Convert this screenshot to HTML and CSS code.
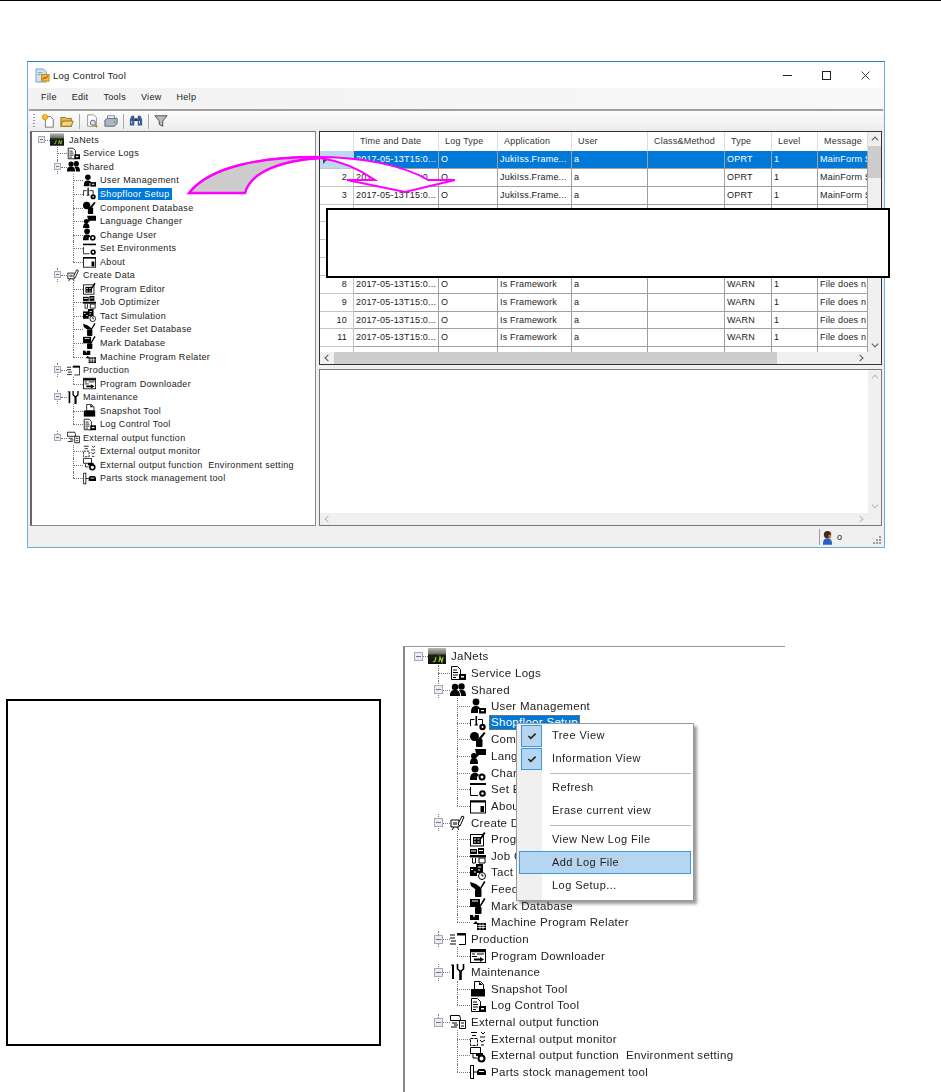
FILE: index.html
```html
<!DOCTYPE html>
<html>
<head>
<meta charset="utf-8">
<title>Log Control Tool</title>
<link rel="stylesheet" href="styles.css">
</head>
<body>
<svg width="0" height="0" class="defs">
<defs>
<linearGradient id="jn" x1="0" y1="0" x2="0" y2="1"><stop offset="0" stop-color="#b9bdb2"/><stop offset=".35" stop-color="#6d7363"/><stop offset=".45" stop-color="#1c2018"/><stop offset="1" stop-color="#0e100c"/></linearGradient>
<symbol id="i-logs" viewBox="0 0 16 16"><path d="M1.500 1.500h6l3 3v10h-9z" fill="#fff" stroke="#000"/><path d="M3 5h4M3 7.500h5M3 10h5M3 12.500h3" stroke="#000"/><rect x="9" y="9" width="7" height="6" fill="#000"/><rect x="11" y="11" width="3" height="1.500" fill="#fff"/></symbol>
<symbol id="i-users" viewBox="0 0 16 16"><circle cx="5" cy="5" r="3.200"/><circle cx="11.500" cy="4.500" r="3.200"/><path d="M0 14c0-5 2-6 5-6s5 1 5 6zM9 8h3c3 0 4 2 4 6h-5c0-3-1-4.500-2-6z"/></symbol>
<symbol id="i-user" viewBox="0 0 16 16"><circle cx="6" cy="4" r="3.400"/><path d="M1 15c0-6 2-7 5-7s3.500 1 4 3H8v4z"/><rect x="9" y="10" width="7" height="5.500" fill="#000"/><rect x="11" y="12" width="3" height="1.200" fill="#fff"/></symbol>
<symbol id="i-shop" viewBox="0 0 16 16"><path d="M.5 11V4.500h4M8 4.500h4.500V9" fill="none" stroke="#000"/><path d="M6.300 1v9" stroke="#000" stroke-width="1.600"/><path d="M4.500 10h3.500" stroke="#000"/><circle cx="12.500" cy="12" r="3.200"/><circle cx="12.500" cy="12" r="1" fill="#fff"/></symbol>
<symbol id="i-comp" viewBox="0 0 16 16"><circle cx="4.500" cy="5.500" r="4.500"/><path d="M8 8l6-7 1.500 1-5 7z"/><rect x="6" y="8" width="6.500" height="8" rx="1"/></symbol>
<symbol id="i-lang" viewBox="0 0 16 16"><path d="M5 1h11v6H9l-2 2z"/><circle cx="4" cy="8" r="3"/><path d="M0 16c0-4 1-6 4-6s4 2 4 6z"/></symbol>
<symbol id="i-change" viewBox="0 0 16 16"><circle cx="5" cy="4" r="3.500"/><path d="M0 15c0-6 2-7 5-7 2 0 3 .5 4 2L7 12v3z"/><circle cx="12" cy="12" r="2.500" fill="#fff" stroke="#000" stroke-width="2"/></symbol>
<symbol id="i-env" viewBox="0 0 16 16"><path d="M0 3h16" stroke="#000" stroke-width="2"/><path d="M.5 6v8.500H8" fill="none" stroke="#000"/><circle cx="12.500" cy="12.500" r="2.300" fill="#fff" stroke="#000" stroke-width="2"/></symbol>
<symbol id="i-about" viewBox="0 0 16 16"><rect x=".5" y="3" width="15" height="12" fill="#fff" stroke="#000"/><path d="M0 3.500h16" stroke="#000" stroke-width="2"/><rect x="10.500" y="8" width="3.500" height="6"/></symbol>
<symbol id="i-create" viewBox="0 0 16 16"><path d="M1 5h8v7H1z" fill="#fff" stroke="#000"/><path d="M3 7h4v3H3z" fill="#777"/><path d="M8 9l4-8 2 1-4 9z" fill="#fff" stroke="#000"/><path d="M4 12l-2 3M7 12l2 3" stroke="#000"/></symbol>
<symbol id="i-prog" viewBox="0 0 16 16"><rect x=".5" y="3.500" width="13" height="11.500" fill="#fff" stroke="#000"/><rect x="3" y="6" width="8" height="7"/><path d="M4 8h2M7.500 8h2M4 11h2M7.500 11h2" stroke="#fff"/><path d="M10 7l4-6 1.500 1-4 6z"/></symbol>
<symbol id="i-job" viewBox="0 0 16 16"><rect x="0" y="1" width="7" height="5"/><rect x="8" y="0" width="6" height="6"/><path d="M1 3h5M9 2.500h4" stroke="#fff"/><rect x="0" y="7" width="16" height="2.500"/><path d="M2.500 10v5h3v-5M9 10h6v5H9z" fill="#fff" stroke="#000"/></symbol>
<symbol id="i-tact" viewBox="0 0 16 16"><rect x="0" y="3" width="7" height="9"/><rect x="6" y="0" width="7" height="9"/><path d="M1 5.500h2M4 8h2M8 3h3M8 6h2" stroke="#fff"/><circle cx="12" cy="12" r="3.500" fill="#fff" stroke="#000"/><path d="M12 10v2h1.500" stroke="#000" fill="none"/></symbol>
<symbol id="i-feeder" viewBox="0 0 16 16"><path d="M0 1l6 2 4 3 1 2H5L1 5z"/><path d="M14 0l1.500 1-5 8-1-1z"/><rect x="5" y="8" width="6.500" height="8" rx="1"/></symbol>
<symbol id="i-mark" viewBox="0 0 16 16"><path d="M0 1h10v8H0z"/><path d="M2 3h6" stroke="#fff"/><path d="M14 0l1.500 1-5 8-1-1z"/><rect x="5" y="9" width="6.500" height="7" rx="1"/></symbol>
<symbol id="i-relater" viewBox="0 0 16 16"><path d="M0 1h3l1 3 1-3h4v5H0z"/><path d="M6 7l2 3H3z"/><rect x="7" y="9" width="9" height="7"/><path d="M7.500 11.500h8M7.500 13.500h8M10 9.500v6M13 9.500v6" stroke="#fff" stroke-width=".8"/></symbol>
<symbol id="i-prod" viewBox="0 0 16 16"><path d="M7.500 2.500h8v11H9" fill="none" stroke="#000"/><path d="M7 3.500h9" stroke="#000" stroke-width="2"/><path d="M0 4h5M0 7h5M1 10h5M0 13h6" stroke="#000"/></symbol>
<symbol id="i-dl" viewBox="0 0 16 16"><rect x=".5" y="1.500" width="15" height="13" fill="#fff" stroke="#000"/><path d="M0 3h16" stroke="#000" stroke-width="2.500"/><path d="M2 6h3M7 6h7M2 8.500h5" stroke="#000"/><path d="M4 10.500h6V9l4 2.500-4 2.500v-1.500H4z"/></symbol>
<symbol id="i-maint" viewBox="0 0 16 16"><path d="M3 1v14" stroke="#000" stroke-width="2"/><path d="M1 1h3" stroke="#000"/><path d="M7.500 0v5l3 2.500 3-2.500V0" fill="none" stroke="#000" stroke-width="1.600"/><path d="M10.500 7v9" stroke="#000" stroke-width="2.600"/></symbol>
<symbol id="i-snap" viewBox="0 0 16 16"><path d="M4.500 .5h6l3 3v5h-9z" fill="#fff" stroke="#000"/><path d="M1 8h14v7.500H1z"/><path d="M9 1l4 3H9z"/></symbol>
<symbol id="i-ext" viewBox="0 0 16 16"><path d="M.5 1.500h9l1 3v2H.5z" fill="#fff" stroke="#000"/><path d="M2 9h5M4 11h4M1 13h6" stroke="#000"/><path d="M9.500 6.500h6v8h-6z" fill="#fff" stroke="#000"/><path d="M11 9h3M11 12h3" stroke="#000"/></symbol>
<symbol id="i-mon" viewBox="0 0 16 16"><path d="M1 1.500h6M2 4.500h4" stroke="#000"/><path d="M.5 7.500h7v7h-7z" fill="none" stroke="#000" stroke-dasharray="3 1"/><path d="M11 1l2 2 2-2M10 6h5M10 9l2 2 3-2M11 14h3" fill="none" stroke="#000"/></symbol>
<symbol id="i-extset" viewBox="0 0 16 16"><path d="M.5 .5h10v6H.5z" fill="#fff" stroke="#000"/><path d="M3 7v4h4" fill="none" stroke="#000"/><rect x="6" y="6" width="7" height="3"/><circle cx="11.500" cy="11.500" r="3" fill="#fff" stroke="#000" stroke-width="2"/></symbol>
<symbol id="i-parts" viewBox="0 0 16 16"><path d="M3.500 1.500H.5v13h3" fill="none" stroke="#000"/><path d="M3.500 1v14M3.500 8H7" stroke="#000"/><path d="M7 7l1.500-2h6l1.500 2v4H7z"/><path d="M9 7.500h5" stroke="#fff"/></symbol>
<symbol id="i-janets" viewBox="0 0 18 16"><rect width="18" height="16" fill="url(#jn)"/><path d="M8 9l-1 4-2 1M11 14l1-5 2 5 1-5" fill="none" stroke="#8fd12a" stroke-width="1.200"/></symbol>
</defs>
</svg>

<div class="topline"></div>

<section class="window">
  <div class="titlebar">
    <svg class="appicon" viewBox="0 0 16 16"><path d="M1 1h8l3 3v11H1z" fill="#cfe3f5" stroke="#7d9fc0"/><path d="M3 5h5M3 7h3" stroke="#7d9fc0"/><rect x="7" y="7" width="8" height="7" fill="#f2c230" stroke="#b98a10"/><path d="M8 12l2-2 1.500 1L14 8" fill="none" stroke="#d8402a" stroke-width="1.200"/></svg>
    <span class="wintitle">Log Control Tool</span>
    <div class="wincontrols">
      <svg class="winbtn" viewBox="0 0 9 9"><path d="M0 4.500h9" stroke="#222"/></svg>
      <svg class="winbtn" viewBox="0 0 9 9"><rect x=".5" y=".5" width="8" height="8" fill="none" stroke="#222"/></svg>
      <svg class="winbtn" viewBox="0 0 9 9"><path d="M.5.500l8 8M8.500.500l-8 8" stroke="#222" stroke-width=".9"/></svg>
    </div>
  </div>
  <nav class="menubar"><span>File</span><span>Edit</span><span>Tools</span><span>View</span><span>Help</span></nav>
  <div class="toolbar">
    <i class="gripper"></i>
    <svg class="tool" viewBox="0 0 16 16"><path d="M5 3h6l3 3v9H5z" fill="#fff" stroke="#666"/><circle cx="4.500" cy="3.500" r="3" fill="#f6c21c" stroke="#e08a10"/></svg>
    <svg class="tool" viewBox="0 0 16 16"><path d="M1 4h5l1 1h6v9H1z" fill="#e8b94a" stroke="#8d6a1c"/><path d="M3 8h12l-2 6H1z" fill="#f5d37c" stroke="#8d6a1c"/></svg>
    <i class="toolsep"></i>
    <svg class="tool" viewBox="0 0 16 16"><path d="M3 1h7l3 3v10H3z" fill="#fff" stroke="#888"/><circle cx="9" cy="10" r="3" fill="#cfe3f5" stroke="#557"/><path d="M11 12l3 3" stroke="#b98a10" stroke-width="2"/></svg>
    <svg class="tool" viewBox="0 0 16 16"><path d="M4 2h8v4H4z" fill="#fff" stroke="#777"/><path d="M1 7l3-2h11v6l-3 3H1z" fill="#a9b6c4" stroke="#55606c"/><circle cx="12" cy="9" r="1" fill="#3fb03f"/></svg>
    <i class="toolsep"></i>
    <svg class="tool" viewBox="0 0 16 16"><path d="M3 2h3v11H1V6zM10 2h3l2 4v7h-5z" fill="#3a5a96"/><rect x="6" y="5" width="4" height="3" fill="#1d2d55"/><path d="M3 8v3M12 8v3" stroke="#cfe0ff"/></svg>
    <i class="toolsep"></i>
    <svg class="tool" viewBox="0 0 16 16"><path d="M1 2h14l-5 6v6l-4-2V8z" fill="#bbb" stroke="#444"/></svg>
  </div>
  <div class="panes">
    <div class="navpane">
      <ul class="tree tree-small">
        <li class="row l0 first"><b class="expander"></b><svg class="ico"><use href="#i-janets"/></svg><span>JaNets</span></li>
        <li class="row l1"><svg class="ico"><use href="#i-logs"/></svg><span>Service Logs</span></li>
        <li class="row l0b"><b class="expander"></b><svg class="ico"><use href="#i-users"/></svg><span>Shared</span></li>
        <li class="row l2"><svg class="ico"><use href="#i-user"/></svg><span>User Management</span></li>
        <li class="row l2"><svg class="ico"><use href="#i-shop"/></svg><span class="sel">Shopfloor Setup</span></li>
        <li class="row l2"><svg class="ico"><use href="#i-comp"/></svg><span>Component Database</span></li>
        <li class="row l2"><svg class="ico"><use href="#i-lang"/></svg><span>Language Changer</span></li>
        <li class="row l2"><svg class="ico"><use href="#i-change"/></svg><span>Change User</span></li>
        <li class="row l2"><svg class="ico"><use href="#i-env"/></svg><span>Set Environments</span></li>
        <li class="row l2 last"><svg class="ico"><use href="#i-about"/></svg><span>About</span></li>
        <li class="row l0b"><b class="expander"></b><svg class="ico"><use href="#i-create"/></svg><span>Create Data</span></li>
        <li class="row l2"><svg class="ico"><use href="#i-prog"/></svg><span>Program Editor</span></li>
        <li class="row l2"><svg class="ico"><use href="#i-job"/></svg><span>Job Optimizer</span></li>
        <li class="row l2"><svg class="ico"><use href="#i-tact"/></svg><span>Tact Simulation</span></li>
        <li class="row l2"><svg class="ico"><use href="#i-feeder"/></svg><span>Feeder Set Database</span></li>
        <li class="row l2"><svg class="ico"><use href="#i-mark"/></svg><span>Mark Database</span></li>
        <li class="row l2 last"><svg class="ico"><use href="#i-relater"/></svg><span>Machine Program Relater</span></li>
        <li class="row l0b"><b class="expander"></b><svg class="ico"><use href="#i-prod"/></svg><span>Production</span></li>
        <li class="row l2 last"><svg class="ico"><use href="#i-dl"/></svg><span>Program Downloader</span></li>
        <li class="row l0b"><b class="expander"></b><svg class="ico"><use href="#i-maint"/></svg><span>Maintenance</span></li>
        <li class="row l2"><svg class="ico"><use href="#i-snap"/></svg><span>Snapshot Tool</span></li>
        <li class="row l2 last"><svg class="ico"><use href="#i-logs"/></svg><span>Log Control Tool</span></li>
        <li class="row l0b lastb"><b class="expander"></b><svg class="ico"><use href="#i-ext"/></svg><span>External output function</span></li>
        <li class="row l2"><svg class="ico"><use href="#i-mon"/></svg><span>External output monitor</span></li>
        <li class="row l2"><svg class="ico"><use href="#i-extset"/></svg><span>External output function&nbsp; Environment setting</span></li>
        <li class="row l2 last"><svg class="ico"><use href="#i-parts"/></svg><span>Parts stock management tool</span></li>
      </ul>
    </div>
    <div class="rightpanes">
      <div class="gridpane">
        <div class="gridbody">
          <div class="grid">
            <div class="c head"></div><div class="c head">Time and Date</div><div class="c head">Log Type</div><div class="c head">Application</div><div class="c head">User</div><div class="c head">Class&amp;Method</div><div class="c head">Type</div><div class="c head">Level</div><div class="c head">Message</div>

            <div class="c num current"><svg class="rowmark" viewBox="0 0 6 8"><path d="M1 0l4 4-4 4z" fill="#445"/></svg></div><div class="c selrow">2017-05-13T15:0...</div><div class="c selrow">O</div><div class="c selrow">JukiIss.Frame...</div><div class="c selrow">a</div><div class="c selrow"></div><div class="c selrow">OPRT</div><div class="c selrow">1</div><div class="c selrow">MainForm S</div>

            <div class="c num">2</div><div class="c">2017-05-13T15:0...</div><div class="c">O</div><div class="c">JukiIss.Frame...</div><div class="c">a</div><div class="c"></div><div class="c">OPRT</div><div class="c">1</div><div class="c">MainForm S</div>

            <div class="c num">3</div><div class="c">2017-05-13T15:0...</div><div class="c">O</div><div class="c">JukiIss.Frame...</div><div class="c">a</div><div class="c"></div><div class="c">OPRT</div><div class="c">1</div><div class="c">MainForm S</div>

            <div class="c num"></div><div class="c"></div><div class="c"></div><div class="c"></div><div class="c"></div><div class="c"></div><div class="c"></div><div class="c"></div><div class="c"></div>
            <div class="c num"></div><div class="c"></div><div class="c"></div><div class="c"></div><div class="c"></div><div class="c"></div><div class="c"></div><div class="c"></div><div class="c"></div>
            <div class="c num"></div><div class="c"></div><div class="c"></div><div class="c"></div><div class="c"></div><div class="c"></div><div class="c"></div><div class="c"></div><div class="c"></div>
            <div class="c num"></div><div class="c"></div><div class="c"></div><div class="c"></div><div class="c"></div><div class="c"></div><div class="c"></div><div class="c"></div><div class="c"></div>

            <div class="c num">8</div><div class="c">2017-05-13T15:0...</div><div class="c">O</div><div class="c">Is Framework</div><div class="c">a</div><div class="c"></div><div class="c">WARN</div><div class="c">1</div><div class="c">File does n</div>

            <div class="c num">9</div><div class="c">2017-05-13T15:0...</div><div class="c">O</div><div class="c">Is Framework</div><div class="c">a</div><div class="c"></div><div class="c">WARN</div><div class="c">1</div><div class="c">File does n</div>

            <div class="c num">10</div><div class="c">2017-05-13T15:0...</div><div class="c">O</div><div class="c">Is Framework</div><div class="c">a</div><div class="c"></div><div class="c">WARN</div><div class="c">1</div><div class="c">File does n</div>

            <div class="c num">11</div><div class="c">2017-05-13T15:0...</div><div class="c">O</div><div class="c">Is Framework</div><div class="c">a</div><div class="c"></div><div class="c">WARN</div><div class="c">1</div><div class="c">File does n</div>

            <div class="c num"></div><div class="c"></div><div class="c"></div><div class="c"></div><div class="c"></div><div class="c"></div><div class="c"></div><div class="c"></div><div class="c"></div>
          </div>
          <div class="vscroll"><i class="up"></i><i class="vthumb"></i><i class="spacer"></i><i class="down"></i></div>
        </div>
        <div class="hscroll"><i class="left"></i><i class="hthumb"></i><i class="right"></i><i class="corner"></i></div>
      </div>
      <div class="detailpane">
        <div class="detailbody"><div class="detailtext"></div><div class="vscroll dim"><i class="up"></i><i class="spacer"></i><i class="down"></i></div></div>
        <div class="hscroll dim"><i class="left"></i><i class="spacer"></i><i class="right"></i><i class="corner"></i></div>
      </div>
    </div>
  </div>
  <div class="statusbar">
    <i class="statsep"></i>
    <svg class="staticon" viewBox="0 0 12 16"><circle cx="6" cy="5" r="4" fill="#3a2c22"/><path d="M7 5h3v3H7z" fill="#e0792a"/><path d="M1 16c0-6 2-7 5-7s5 1 5 7z" fill="#2c5fbe"/></svg>
    <span class="statuser">o</span>
    <svg class="grip" viewBox="0 0 12 12"><path d="M9 2h2v2H9zM6 5h2v2H6zM9 5h2v2H9zM3 8h2v2H3zM6 8h2v2H6zM9 8h2v2H9z" fill="#9a9a9a"/></svg>
  </div>
  <svg class="callout-arrow" viewBox="0 0 290 60" width="290" height="60">
    <path d="M8 48C30 20 85 12 135 12C180 12 222 20 247 35H274L224 47L166 35H194C178 24 160 16 139 13C105 15 70 25 64 48Z" fill="#fff" stroke="#ff00ff" stroke-width="2"/>
    <path d="M8 48C30 20 85 12 135 12L139 13C105 15 70 25 64 48Z" fill="#ccc" stroke="#ff00ff" stroke-width="2.400"/>
  </svg>
  <div class="blankbox topbox"></div>
</section>

<section class="lower">
  <div class="blankbox sidebox"></div>
  <div class="treepanel">
    <ul class="tree tree-large">
      <li class="row l0 first"><b class="expander"></b><svg class="ico"><use href="#i-janets"/></svg><span>JaNets</span></li>
      <li class="row l1"><svg class="ico"><use href="#i-logs"/></svg><span>Service Logs</span></li>
      <li class="row l0b"><b class="expander"></b><svg class="ico"><use href="#i-users"/></svg><span>Shared</span></li>
      <li class="row l2"><svg class="ico"><use href="#i-user"/></svg><span>User Management</span></li>
      <li class="row l2"><svg class="ico"><use href="#i-shop"/></svg><span class="sel dotted">Shopfloor Setup</span></li>
      <li class="row l2"><svg class="ico"><use href="#i-comp"/></svg><span class="under">Component Database</span></li>
      <li class="row l2"><svg class="ico"><use href="#i-lang"/></svg><span class="under">Language Changer</span></li>
      <li class="row l2"><svg class="ico"><use href="#i-change"/></svg><span class="under">Change User</span></li>
      <li class="row l2"><svg class="ico"><use href="#i-env"/></svg><span class="under">Set Environments</span></li>
      <li class="row l2 last"><svg class="ico"><use href="#i-about"/></svg><span class="under">About</span></li>
      <li class="row l0b"><b class="expander"></b><svg class="ico"><use href="#i-create"/></svg><span class="under-top">Create Data</span></li>
      <li class="row l2"><svg class="ico"><use href="#i-prog"/></svg><span class="under">Program Editor</span></li>
      <li class="row l2"><svg class="ico"><use href="#i-job"/></svg><span class="under">Job Optimizer</span></li>
      <li class="row l2"><svg class="ico"><use href="#i-tact"/></svg><span class="under">Tact Simulation</span></li>
      <li class="row l2"><svg class="ico"><use href="#i-feeder"/></svg><span class="under">Feeder Set Database</span></li>
      <li class="row l2"><svg class="ico"><use href="#i-mark"/></svg><span>Mark Database</span></li>
      <li class="row l2 last"><svg class="ico"><use href="#i-relater"/></svg><span>Machine Program Relater</span></li>
      <li class="row l0b"><b class="expander"></b><svg class="ico"><use href="#i-prod"/></svg><span>Production</span></li>
      <li class="row l2 last"><svg class="ico"><use href="#i-dl"/></svg><span>Program Downloader</span></li>
      <li class="row l0b"><b class="expander"></b><svg class="ico"><use href="#i-maint"/></svg><span>Maintenance</span></li>
      <li class="row l2"><svg class="ico"><use href="#i-snap"/></svg><span>Snapshot Tool</span></li>
      <li class="row l2 last"><svg class="ico"><use href="#i-logs"/></svg><span>Log Control Tool</span></li>
      <li class="row l0b lastb"><b class="expander"></b><svg class="ico"><use href="#i-ext"/></svg><span>External output function</span></li>
      <li class="row l2"><svg class="ico"><use href="#i-mon"/></svg><span>External output monitor</span></li>
      <li class="row l2"><svg class="ico"><use href="#i-extset"/></svg><span>External output function&nbsp; Environment setting</span></li>
      <li class="row l2 last"><svg class="ico"><use href="#i-parts"/></svg><span>Parts stock management tool</span></li>
    </ul>
    <div class="ctxmenu">
      <div class="mi checked"><i class="check"><svg viewBox="0 0 10 10"><path d="M2 5l2 2 4-4" fill="none" stroke="#222" stroke-width="1.300"/></svg></i>Tree View</div>
      <div class="mi checked"><i class="check"><svg viewBox="0 0 10 10"><path d="M2 5l2 2 4-4" fill="none" stroke="#222" stroke-width="1.300"/></svg></i>Information View</div>
      <hr>
      <div class="mi">Refresh</div>
      <div class="mi">Erase current view</div>
      <hr>
      <div class="mi">View New Log File</div>
      <div class="mi active">Add Log File</div>
      <div class="mi">Log Setup...</div>
    </div>
  </div>
</section>
</body>
</html>
```
FILE: styles.css
```css
* { box-sizing: border-box; }
html, body { margin: 0; padding: 0; background: #fff; }
body { width: 941px; height: 1092px; overflow: hidden; font-family: "Liberation Sans", Arial, sans-serif; color: #1a1a1a; }
.defs { position: absolute; }
ul { list-style: none; margin: 0; padding: 0; }
i, b { display: block; font-style: normal; }
.topline { height: 1px; background: #000; }

.window { position: relative; width: 858px; height: 487px; margin: 60px 0 0 27px; border: 1px solid #6aaee0; border-top-color: #2d86d0; background: #f0f0f0; display: flex; flex-direction: column; font-size: 9px; }
.titlebar { height: 26px; flex: none; background: #fff; display: flex; align-items: center; padding-left: 7px; }
.appicon { width: 15px; height: 15px; margin-right: 3px; }
.wintitle { font-size: 9.5px; letter-spacing: .25px; color: #222; }
.wincontrols { margin-left: auto; display: flex; gap: 30px; padding-right: 14px; }
.winbtn { width: 9px; height: 9px; display: block; }
.menubar { height: 21px; flex: none; background: linear-gradient(90deg, #f2f2f2, #f8f8f8); display: flex; align-items: center; padding: 0 0 3px 13px; gap: 15px; font-size: 9px; letter-spacing: .3px; }
.toolbar { height: 22px; flex: none; margin: 0 1px; border-top: 2px solid #a0a0a0; background: linear-gradient(#fdfdfd, #ececec); display: flex; align-items: center; padding-left: 4px; gap: 5px; position: relative; }
.gripper { width: 2px; height: 14px; margin-right: 1px; background: repeating-linear-gradient(#999 0 1px, transparent 1px 3px); }
.tool { width: 14px; height: 14px; flex: none; }
.toolsep { width: 1px; height: 15px; background: #aaa; }
.panes { flex: 1; min-height: 0; display: flex; padding: 0 2px; gap: 3px; background: #f0f0f0; }

.navpane { width: 286px; flex: none; height: 395px; border: 1px solid #8a8a8a; border-left: 2px solid #666; border-top-color: #777; background: #fff; overflow: hidden; padding-top: 1px; }
.rightpanes { flex: 1; min-width: 0; display: flex; flex-direction: column; gap: 4px; height: 395px; }
.gridpane { height: 234px; border: 1px solid #333; background: #fff; display: flex; flex-direction: column; }
.gridbody { flex: 1; min-height: 0; display: flex; overflow: hidden; }
.grid { flex: 1; min-width: 0; display: grid; grid-template-columns: 34px 85px 59px 74px 76px 77px 47px 46px 50px; grid-auto-rows: 17.85px; grid-template-rows: 19px; overflow: hidden; font-size: 9px; letter-spacing: .2px; }
.c { border-right: 1px solid #a0a0a0; border-bottom: 1px solid #a0a0a0; white-space: nowrap; overflow: hidden; padding: 0 2px; line-height: 17px; }
.head { background: #fff; border-right-color: #ddd; border-bottom: 0; padding-left: 6px; line-height: 19px; color: #333; }
.num { text-align: right; padding-right: 6px; border-right-color: #c4c4c4; border-bottom-color: #c4c4c4; }
.current { background: #bcd9f2; text-align: left; padding-left: 2px; }
.rowmark { width: 6px; height: 8px; display: block; margin-top: 5px; }
.selrow { background: #0078d7; color: #fff; }
.vscroll { width: 13px; flex: none; background: #f0f0f0; display: flex; flex-direction: column; position: relative; }
.vscroll .up, .vscroll .down { height: 14px; flex: none; position: relative; }
.vthumb { height: 32px; flex: none; background: #cdcdcd; }
.spacer { flex: 1; }
.hscroll { height: 12px; flex: none; background: #f0f0f0; display: flex; align-items: stretch; }
.left, .right, .corner { width: 14px; flex: none; position: relative; }
.corner { width: 13px; }
.hthumb { width: 443px; flex: none; background: #cdcdcd; }
.hscroll .hthumb + .right { margin-left: auto; }
.up::after, .down::after, .left::after, .right::after { content: ""; position: absolute; left: 50%; top: 50%; width: 4px; height: 4px; border-left: 1.5px solid #555; border-top: 1.5px solid #555; }
.up::after { transform: translate(-50%, -30%) rotate(45deg); }
.down::after { transform: translate(-50%, -70%) rotate(225deg); }
.left::after { transform: translate(-30%, -50%) rotate(-45deg); }
.right::after { transform: translate(-70%, -50%) rotate(135deg); }
.dim .up::after, .dim .down::after, .dim .left::after, .dim .right::after { border-color: #bbb; }
.detailpane { flex: 1; border: 1px solid #777; background: #fff; display: flex; flex-direction: column; min-height: 0; }
.detailbody { flex: 1; display: flex; min-height: 0; }
.detailtext { flex: 1; background: #fff; }

.statusbar { height: 20px; flex: none; background: #f0f0f0; display: flex; align-items: center; justify-content: flex-end; padding-right: 2px; }
.statsep { width: 1px; height: 16px; background: #a0a0a0; margin-right: 2px; }
.staticon { width: 11px; height: 15px; margin-right: 4px; }
.statuser { width: 33px; font-size: 9px; }
.grip { width: 12px; height: 12px; margin-top: 5px; }

.callout-arrow { position: absolute; left: 153px; top: 83px; }
.blankbox { background: #fff; border: 2px solid #000; }
.topbox { position: absolute; left: 298px; top: 146px; width: 564px; height: 70px; }

.lower { display: flex; align-items: flex-start; margin-top: 98px; padding-left: 6px; height: 446px; }
.sidebox { width: 375px; height: 347px; margin-top: 53px; flex: none; }
.treepanel { position: relative; width: 382px; height: 446px; margin-left: 22px; border-top: 1px solid #999; border-left: 2px solid #888; filter: blur(.25px); }

.tree .row { display: flex; align-items: center; white-space: nowrap; position: relative; }
.tree-small { font-size: 9px; letter-spacing: .33px; }
.tree-small .row { height: 13.56px; }
.tree-small .ico { width: 13px; height: 13px; flex: none; margin-right: 3px; }
.tree-small .l0 { padding-left: 18px; }
.tree-small .l1, .tree-small .l0b { padding-left: 35px; }
.tree-small .l2 { padding-left: 51px; }
.tree-small .l2 .ico { margin-right: 4px; }
.tree-small .expander { position: absolute; width: 7px; height: 7px; top: 3px; }
.tree-small .l0 .expander { left: 6px; }
.tree-small .l0b .expander { left: 22px; }
.tree-small .l0 .ico { width: 14px; height: 13px; margin-right: 5px; }

.tree-large { font-size: 11.5px; letter-spacing: .3px; padding-top: 1px; color: #222; }
.tree-large .row { height: 16.64px; }
.tree-large .ico { width: 16px; height: 16px; flex: none; margin-right: 5px; }
.tree-large .l0 { padding-left: 23px; }
.tree-large .l1, .tree-large .l0b { padding-left: 45px; }
.tree-large .l2 { padding-left: 65px; }
.tree-large .expander { position: absolute; width: 9px; height: 9px; top: 4px; }
.tree-large .l0 .expander { left: 9px; }
.tree-large .l0b .expander { left: 29px; }
.tree-large .l0 .ico { width: 18px; height: 16px; }

.expander { border: 1px solid #a8a8b0; background: linear-gradient(90deg, transparent 1px, #5a78b0 1px, #5a78b0 calc(100% - 1px), transparent calc(100% - 1px)) center / 100% 1px no-repeat, #ebebf0; z-index: 1; }
.row::before { content: ""; position: absolute; top: 50%; border-top: 1px dotted #777; }
.row::after { content: ""; position: absolute; top: 0; bottom: 0; border-left: 1px dotted #777; }
.tree-small .first::before { left: 13px; width: 5px; }
.tree-small .first::after { display: none; }
.tree-small .l1::before { left: 25px; width: 10px; }
.tree-small .l1::after, .tree-small .l0b::after { left: 25px; }
.tree-small .l0b::before { left: 29px; width: 6px; }
.tree-small .l2::before { left: 41px; width: 10px; }
.tree-small .l2::after { left: 41px; }
.tree-large .first::before { left: 18px; width: 5px; }
.tree-large .first::after { display: none; }
.tree-large .l1::before { left: 33px; width: 12px; }
.tree-large .l1::after, .tree-large .l0b::after { left: 33px; }
.tree-large .l0b::before { left: 38px; width: 7px; }
.tree-large .l2::before { left: 52px; width: 13px; }
.tree-large .l2::after { left: 52px; }
.row.last::after, .row.lastb::after { bottom: 50%; }

.sel { background: #0078d7; color: #fff; padding: 0 2px; margin-left: -2px; line-height: 12px; }
.tree-large .sel { line-height: 15px; }
.sel.dotted { outline: 1px dotted #c87a20; outline-offset: -1px; }
.under { max-width: 25px; overflow: hidden; }
.under-top { max-width: 45px; overflow: hidden; }

.ctxmenu { position: absolute; left: 111px; top: 76px; width: 178px; height: 178px; background: linear-gradient(90deg, #f0f0f0 0, #f0f0f0 25px, #fff 25px); border: 1px solid #999; box-shadow: 3px 3px 3px rgba(0,0,0,.4); font-size: 11px; letter-spacing: .45px; padding: 0 2px; color: #222; }
.ctxmenu hr { margin: 3px 0 2px 31px; border: 0; border-top: 1px solid #bbb; height: 0; }
.mi { height: 23px; line-height: 21px; padding-left: 32px; position: relative; border: 1px solid transparent; }
.mi.active { background: #b5d5f0; border-color: #3a9ae0; }
.check { position: absolute; left: 1px; top: 0; width: 21px; height: 22px; background: #b5d5f0; border: 1px solid #3a9ae0; display: flex; align-items: center; justify-content: center; }
.check svg { width: 12px; height: 12px; }
```
